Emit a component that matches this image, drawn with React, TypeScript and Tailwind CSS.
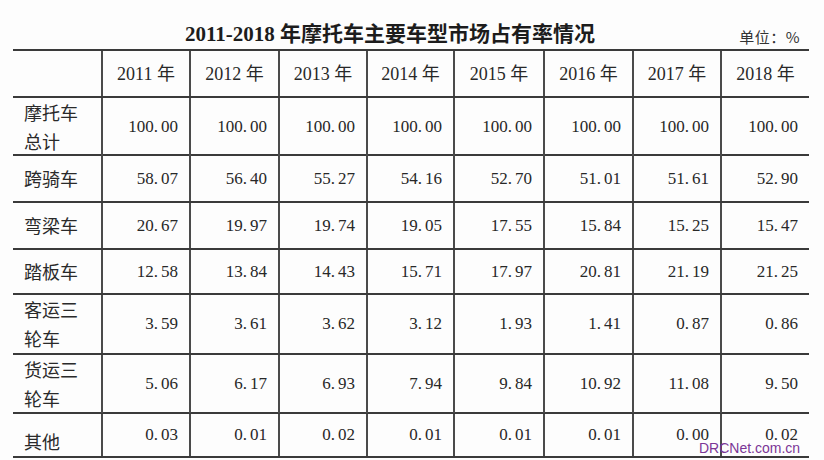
import React from "react";

const years = ["2011", "2012", "2013", "2014", "2015", "2016", "2017", "2018"];

const rows: { label: string[]; values: string[]; h: string; low?: boolean }[] = [
  { label: ["摩托车", "总计"], values: ["100.00", "100.00", "100.00", "100.00", "100.00", "100.00", "100.00", "100.00"], h: "h-[58px]" },
  { label: ["跨骑车"], values: ["58.07", "56.40", "55.27", "54.16", "52.70", "51.01", "51.61", "52.90"], h: "h-[47px]" },
  { label: ["弯梁车"], values: ["20.67", "19.97", "19.74", "19.05", "17.55", "15.84", "15.25", "15.47"], h: "h-[47px]" },
  { label: ["踏板车"], values: ["12.58", "13.84", "14.43", "15.71", "17.97", "20.81", "21.19", "21.25"], h: "h-[45px]" },
  { label: ["客运三", "轮车"], values: ["3.59", "3.61", "3.62", "3.12", "1.93", "1.41", "0.87", "0.86"], h: "h-[60px]" },
  { label: ["货运三", "轮车"], values: ["5.06", "6.17", "6.93", "7.94", "9.84", "10.92", "11.08", "9.50"], h: "h-[59px]" },
  { label: ["其他"], values: ["0.03", "0.01", "0.02", "0.01", "0.01", "0.01", "0.00", "0.02"], h: "h-[44px]", low: true },
];

const cols = "grid grid-cols-[88px_88px_89px_88px_87px_90px_89px_88px_89px]";
const serif = "font-['Liberation_Serif','Noto_Sans_CJK_SC',serif]";
const cjk = "font-['Noto_Sans_CJK_SC',sans-serif]";

const Num = ({ v }: { v: string }) => {
  const [a, b] = v.split(".");
  return (
    <span>
      {a}
      <span className="mr-[3px]">.</span>
      {b}
    </span>
  );
};

export default function App() {
  return (
    <div className="relative w-[824px] h-[460px] bg-[#fdfdfd] text-[#282828] overflow-hidden">
      <div className="flex items-end h-[49px] pl-[185px] pr-[24px] pb-[4px]">
        <h1 className={`${serif} text-[21px] font-bold leading-none text-[#1c1c1c]`}>
          2011-2018 年摩托车主要车型市场占有率情况
        </h1>
        <span className={`${cjk} ml-auto text-[15px] leading-none text-[#333] pb-[1px] tracking-[0.5px]`}>单位：%</span>
      </div>

      <div className="mx-[13px] w-[796px] border-b-2 border-[#3a3a3a]">
        <div className={`${cols} h-[47px] border-t-2 border-[#3a3a3a]`}>
          <div />
          {years.map((y) => (
            <div key={y} className={`${serif} border-l-2 border-[#4a4a4a] flex items-center justify-center text-[18px] pt-[1px]`}>
              {y} 年
            </div>
          ))}
        </div>
        {rows.map((r) => (
          <div key={r.label.join("")} className={`${cols} ${r.h} border-t-2 border-[#3a3a3a]`}>
            <div className={`${cjk} flex flex-col justify-center pl-[11px] text-[18px] leading-[29px] text-[#2a2a2a] ${r.low ? "pt-[12px]" : ""}`}>
              {r.label.map((l) => (
                <span key={l}>{l}</span>
              ))}
            </div>
            {r.values.map((v, i) => (
              <div key={i} className={`${serif} border-l-2 border-[#4a4a4a] flex items-center justify-end pr-[11px] text-[17px]`}>
                <Num v={v} />
              </div>
            ))}
          </div>
        ))}
      </div>

      <span className="absolute left-[699px] top-[439px] font-['Liberation_Sans',sans-serif] text-[14px] leading-[18px] text-[#7b3696]">
        DRCNet.com.cn
      </span>
    </div>
  );
}
